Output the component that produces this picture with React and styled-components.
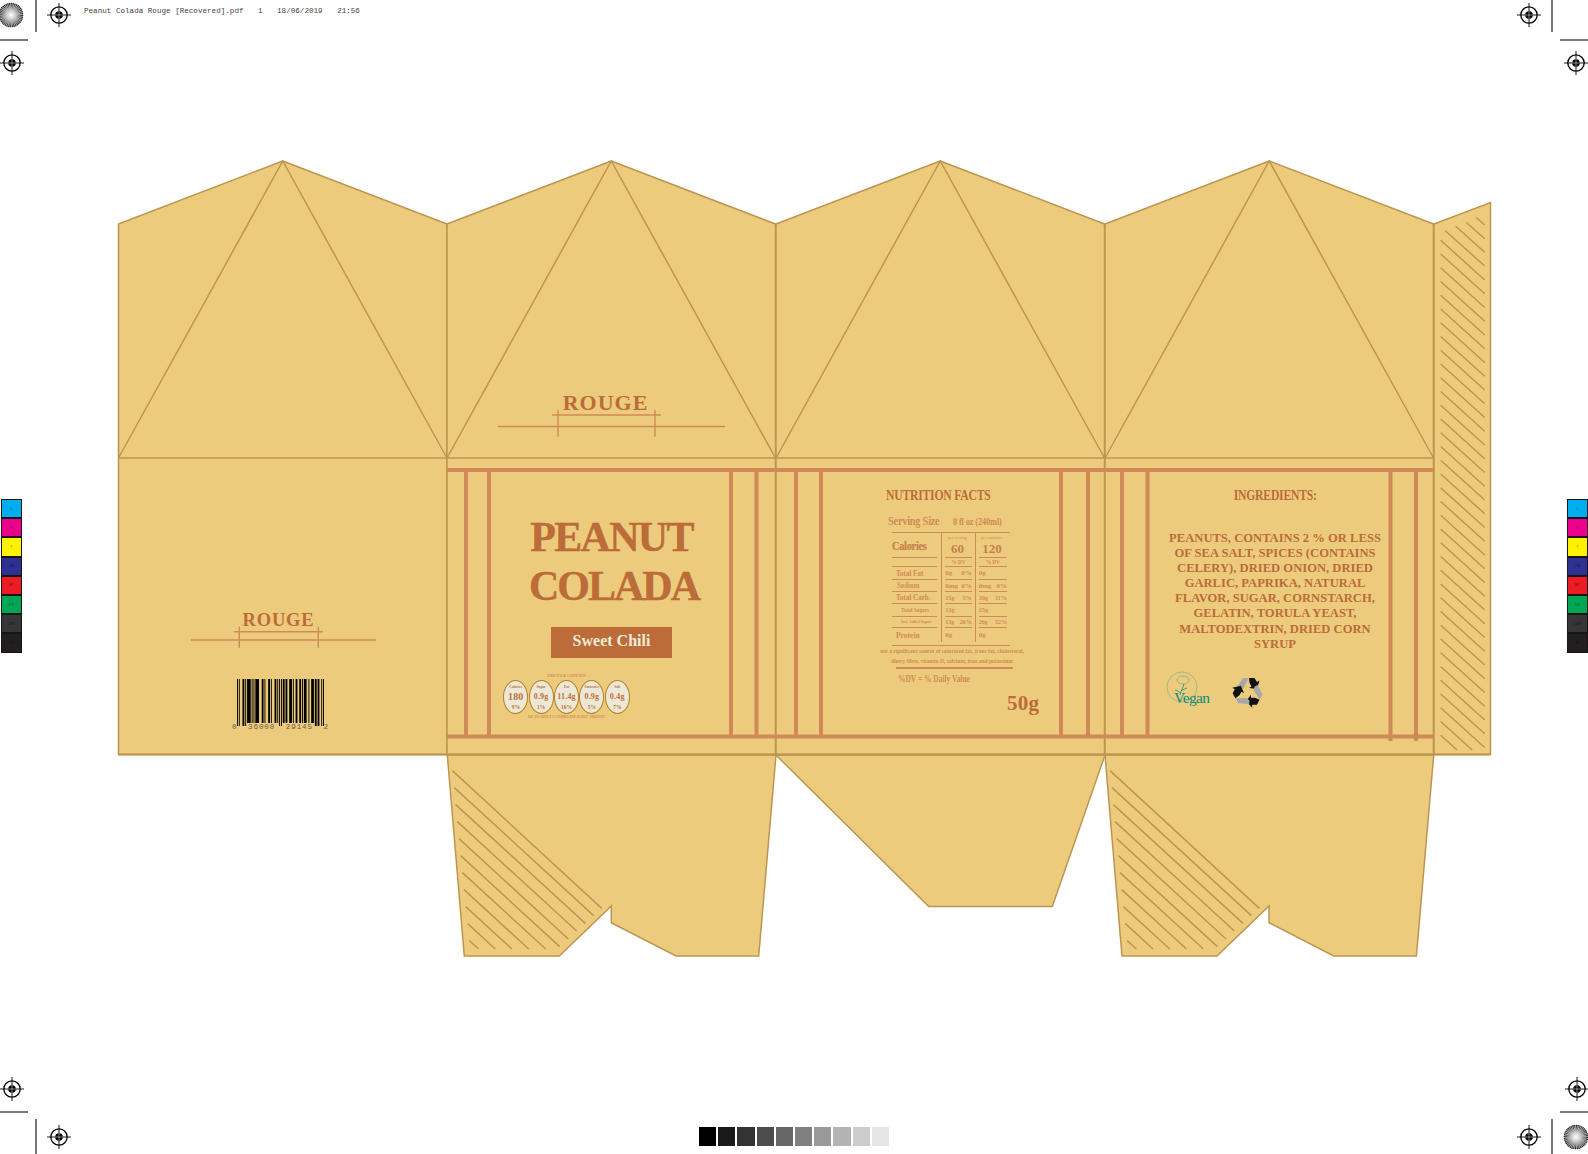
import React from "react";
import styled, { createGlobalStyle } from "styled-components";

const Global = createGlobalStyle`
  html, body { margin: 0; padding: 0; background: #fff; }
  body { font-family: "Liberation Serif", serif; }
`;

const FILL = "#edcb7d";
const CREASE = "#bd9550";
const BAND = "#d08a57";
const BROWN = "#bb6c38";
const SOFT = "#d08b55";

const Sheet = styled.div`
  position: relative;
  width: 1588px;
  height: 1154px;
  overflow: hidden;
  background: #fff;
  font-family: "Liberation Serif", serif;
`;

const DielineArt = styled.svg`
  position: absolute;
  left: 0;
  top: 0;
`;

/* ---- printer marks ---- */
const SlugLine = styled.div`
  position: absolute;
  left: 84px;
  top: 6px;
  display: flex;
  gap: 14.5px;
  font-family: "Liberation Mono", monospace;
  font-size: 7.6px;
  line-height: 10px;
  color: #444;
`;

const Mark = styled.svg`
  position: absolute;
  left: ${(p) => p.$x - 13}px;
  top: ${(p) => p.$y - 13}px;
`;

const Crop = styled.div`
  position: absolute;
  left: ${(p) => p.$x}px;
  top: ${(p) => p.$y}px;
  width: ${(p) => p.$w}px;
  height: ${(p) => p.$h}px;
  background: #7a7a7a;
`;

const ColorBar = styled.div`
  position: absolute;
  left: ${(p) => p.$x}px;
  top: 499px;
  width: 21px;
  display: flex;
  flex-direction: column;
`;

const ColorCell = styled.div`
  height: 17.2px;
  border: 1px solid #151515;
  background: ${(p) => p.$c};
  display: flex;
  align-items: center;
  justify-content: center;
  font-family: "Liberation Sans", sans-serif;
  font-size: 3.5px;
  color: rgba(0, 0, 0, 0.6);
`;

const GrayStrip = styled.div`
  position: absolute;
  left: 699px;
  top: 1127px;
  display: flex;
  gap: 2px;
`;

const GrayCell = styled.div`
  width: 17.2px;
  height: 19px;
  background: ${(p) => p.$c};
`;

/* ---- rouge logo ---- */
const Logo = styled.div`
  position: absolute;
  left: ${(p) => p.$x}px;
  top: ${(p) => p.$y}px;
  width: ${(p) => p.$w}px;
  height: ${(p) => p.$h}px;
`;

const LogoWord = styled.div`
  position: absolute;
  left: 0;
  right: ${(p) => p.$shift}px;
  top: ${(p) => p.$top}px;
  text-align: center;
  font-weight: 700;
  font-size: ${(p) => p.$size}px;
  letter-spacing: ${(p) => p.$track}px;
  line-height: 1;
  color: ${BROWN};
`;

const LogoArt = styled.svg`
  position: absolute;
  left: 0;
  top: 0;
`;

/* ---- barcode ---- */
const Barcode = styled.div`
  position: absolute;
  left: 232px;
  top: 679px;
  width: 97px;
`;

const Bars = styled.svg`
  display: block;
  margin-left: 4.7px;
`;

const BarDigits = styled.div`
  display: flex;
  justify-content: space-between;
  margin-top: -3px;
  font-family: "Liberation Mono", monospace;
  font-size: 7.6px;
  line-height: 8px;
  letter-spacing: 0.85px;
  color: #665d4a;
`;

/* ---- front panel ---- */
const FrontPanel = styled.section`
  position: absolute;
  left: 447px;
  top: 458px;
  width: 329px;
  height: 296px;
  display: flex;
  flex-direction: column;
  align-items: center;
  padding-top: 55px;
  box-sizing: border-box;
`;

const Title = styled.h1`
  margin: 0;
  font-size: 42px;
  line-height: 48.6px;
  font-weight: 700;
  -webkit-text-stroke: 0.4px ${BROWN};
  text-align: center;
  color: ${BROWN};
`;

const TitleLine = styled.span`
  display: block;
  letter-spacing: ${(p) => p.$track}px;
  margin-left: ${(p) => p.$nudge}px;
`;

const Flavour = styled.div`
  margin-top: 17px;
  width: 121px;
  height: 31px;
  padding-bottom: 3px;
  box-sizing: border-box;
  background: ${BROWN};
  color: #f1ebd9;
  font-size: 16px;
  font-weight: 700;
  display: flex;
  align-items: center;
  justify-content: center;
`;

const Gda = styled.div`
  align-self: flex-start;
  margin: 16px 0 0 56px;
  width: 127px;
  display: flex;
  flex-direction: column;
  align-items: center;
`;

const GdaNote = styled.div`
  font-size: 3.6px;
  line-height: 5px;
  font-weight: 700;
  white-space: nowrap;
  color: ${SOFT};
`;

const GdaRow = styled.div`
  display: flex;
  gap: 0.2px;
  margin: 0.5px 0 1.5px;
`;

const Oval = styled.div`
  width: 25.2px;
  height: 34px;
  box-sizing: border-box;
  border: 1.5px solid #b7802a;
  border-radius: 50%;
  background: #ece8d5;
  display: flex;
  flex-direction: column;
  align-items: center;
  justify-content: space-between;
  padding: 4px 0 3px;
  color: #c0703d;
`;

const OvalLabel = styled.div`
  font-size: 3.6px;
  line-height: 4px;
  font-weight: 700;
`;

const OvalValue = styled.div`
  font-size: ${(p) => (p.$big ? 10 : 8)}px;
  line-height: 9px;
  font-weight: 700;
  white-space: nowrap;
  letter-spacing: 0.2px;
`;

const OvalPct = styled.div`
  font-size: 5.5px;
  line-height: 6px;
  font-weight: 700;
`;

/* ---- nutrition panel ---- */
const NutritionPanel = styled.section`
  position: absolute;
  left: 776px;
  top: 458px;
  width: 329px;
  height: 296px;
  box-sizing: border-box;
  padding: 29px 0 0 110px;
  display: flex;
  flex-direction: column;
  align-items: flex-start;
`;

/* the reference face is a condensed didone, nothing installed comes close */
const PanelHeading = styled.h2`
  margin: 0;
  font-size: 15px;
  line-height: 16px;
  font-weight: 700;
  letter-spacing: -0.3px;
  white-space: nowrap;
  color: ${BROWN};
  transform: scaleX(0.78);
  transform-origin: ${(p) => p.$origin || "left"} center;
`;

const Serving = styled.div`
  margin: 10px 0 2.5px 2px;
  height: 16px;
  display: flex;
  align-items: center;
  gap: 15px;
  color: ${SOFT};
  font-weight: 700;
  white-space: nowrap;
`;

const ServingLabel = styled.span`
  display: inline-block;
  width: 50px;
  font-size: 12.5px;
  letter-spacing: -0.3px;
  transform: scaleX(0.83);
  transform-origin: left center;
`;

const ServingValue = styled.span`
  display: inline-block;
  font-size: 9.5px;
  letter-spacing: -0.2px;
  padding-top: 2px;
  transform: scaleX(0.89);
  transform-origin: left center;
`;

const Table = styled.div`
  margin-left: 6px;
  width: 118px;
  display: grid;
  grid-template-columns: 49.2px 33.6px 35.2px;
  border-top: 1.3px solid ${BAND};
  border-bottom: 1.3px solid ${BAND};
  padding-bottom: 2.5px;
  box-sizing: content-box;
  color: ${SOFT};
  font-weight: 700;
`;

const Cell = styled.div`
  height: ${(p) => p.$h}px;
  box-sizing: border-box;
  padding: ${(p) => (p.$first ? "0 4px 0 0" : "0 3px")};
  border-left: ${(p) => (p.$first ? "none" : `1.3px solid ${BAND}`)};
`;

const CellRow = styled.div`
  height: 100%;
  box-sizing: border-box;
  display: flex;
  align-items: center;
  justify-content: ${(p) => (p.$center ? "center" : "space-between")};
  white-space: nowrap;
  font-size: ${(p) => p.$size || 6}px;
  padding-left: ${(p) => p.$indent || 0}px;
  padding-top: ${(p) => p.$drop || 0}px;
  border-bottom: ${(p) => (p.$rule ? `1.2px solid ${BAND}` : "none")};
`;

const CellStack = styled.div`
  height: 100%;
  box-sizing: border-box;
  display: flex;
  flex-direction: column;
  align-items: center;
  padding-right: 2px;
  border-bottom: 1.2px solid ${BAND};
`;

const PerLabel = styled.div`
  margin-top: 2px;
  font-size: 4.2px;
  line-height: 6px;
  font-weight: 400;
  white-space: nowrap;
`;

const PerValue = styled.div`
  font-size: 13px;
  line-height: 15px;
  color: #c97f4d;
`;

const CaloriesLabel = styled.span`
  display: inline-block;
  font-size: 12px;
  letter-spacing: -0.3px;
  color: #c97f4d;
  -webkit-text-stroke: 0.2px #c97f4d;
  transform: scaleX(0.86);
  transform-origin: left center;
`;

const RowLabel = styled.span`
  display: inline-block;
  transform: scaleX(0.9);
  transform-origin: left center;
`;

const Footnote = styled.div`
  margin: 0 0 0 -7px;
  width: 146px;
  text-align: center;
  font-size: 5.5px;
  line-height: 10px;
  white-space: nowrap;
  font-weight: 700;
  color: ${SOFT};
`;

const FootRule = styled.div`
  margin: 1.5px 0 0 9.7px;
  width: 117px;
  height: 1.2px;
  background: ${BAND};
`;

const DailyValue = styled.div`
  margin: 4px 0 0 12px;
  font-size: 9.3px;
  line-height: 12px;
  font-weight: 700;
  white-space: nowrap;
  color: ${SOFT};
  transform: scaleX(0.8);
  transform-origin: left center;
`;

const Weight = styled.div`
  margin: 6px 0 0 121px;
  font-size: 21px;
  line-height: 24px;
  font-weight: 700;
  letter-spacing: 0.3px;
  color: ${BROWN};
`;

/* ---- ingredients panel ---- */
const IngredientsPanel = styled.section`
  position: absolute;
  left: 1105px;
  top: 458px;
  width: 329px;
  height: 296px;
  box-sizing: border-box;
  padding: 29px 0 0 11px;
  display: flex;
  flex-direction: column;
  align-items: center;
`;

const IngredientsText = styled.p`
  margin: 28px 0 0;
  font-size: 12.6px;
  line-height: 15.1px;
  font-weight: 700;
  text-align: center;
  white-space: nowrap;
  color: ${BROWN};
`;

const Badges = styled.div`
  align-self: flex-start;
  margin: 19px 0 0 50px;
  display: flex;
  align-items: flex-start;
  gap: 16px;
`;

const VeganBadge = styled.div`
  position: relative;
  width: 50px;
  height: 34px;
`;

const VeganWord = styled.span`
  position: absolute;
  left: 8px;
  top: 20px;
  font-size: 15.5px;
  line-height: 14px;
  letter-spacing: -0.7px;
  color: #0a8d7f;
`;

const VeganArt = styled.svg`
  position: absolute;
  left: 0;
  top: 0;
`;

const RecycleArt = styled.svg`
  display: block;
  margin-top: 5px;
`;

const upcL = ["0001101", "0011001", "0010011", "0111101", "0100011", "0110001", "0101111", "0111011", "0110111", "0001011"];
const upcR = upcL.map((c) => c.replace(/./g, (b) => (b === "0" ? "1" : "0")));

function upcModules(code) {
  const digits = code.split("").map(Number);
  return (
    "101" +
    digits.slice(0, 6).map((d) => upcL[d]).join("") +
    "01010" +
    digits.slice(6).map((d) => upcR[d]).join("") +
    "101"
  );
}

const isLongBar = (i) => i < 10 || i > 84 || (i >= 45 && i < 50);

// joins neighbouring modules so rects don't leave seams
function upcRuns(modules) {
  const runs = [];
  modules.split("").forEach((m, i) => {
    if (m !== "1") return;
    const last = runs[runs.length - 1];
    if (last && last.x + last.w === i && last.long === isLongBar(i)) last.w += 1;
    else runs.push({ x: i, w: 1, long: isLongBar(i) });
  });
  return runs;
}

const pt = (a) => a.map((p) => p.join(",")).join(" ");

const tops = [118.5, 447, 776, 1105];
const flap1 = [[447.3, 755], [464.3, 956], [559.3, 956], [611.3, 906], [611.3, 922.7], [676, 956], [758.7, 956], [776, 755]];
const flap1Hatch = [
  [37, 62, 485, 475], [43, 113, 461, 497], [47, 164, 436, 520], [52, 215, 410, 543],
  [57, 266, 385, 567], [62, 317, 359, 590], [67, 368, 317, 597], [72, 419, 266, 597],
  [77, 470, 216, 597], [83, 521, 166, 597], [88, 572, 116, 597],
].map(([a, b, c, d]) => [440 + a / 3, 750 + b / 3, 440 + c / 3, 750 + d / 3]);

function tabHatch() {
  const out = [
    [1476, 217.3, 1484.7, 225],
    [1466, 222.3, 1484.7, 238.7],
    [1455.7, 226.3, 1484.7, 252.3],
    [1445.3, 230.7, 1484.7, 266],
  ];
  for (let y = 240.3; y < 746; y += 13.75) {
    const end = y + 39.7;
    if (end <= 750) out.push([1440.7, y, 1484.7, end]);
    else out.push([1440.7, y, 1440.7 + ((750 - y) * 44) / 39.7, 750]);
  }
  return out;
}

const stripes = [466, 489, 731, 756.5, 796, 821, 1061, 1088, 1122, 1147.5, 1390.5, 1416];

function Dieline() {
  return (
    <DielineArt width="1588" height="1154" viewBox="0 0 1588 1154">
      {tops.map((x) => {
        const w = 328.5;
        const apex = x + w / 2;
        return (
          <g key={x}>
            <polygon
              points={pt([[x, 754.5], [x, 224], [apex, 161], [x + w, 224], [x + w, 754.5]])}
              fill={FILL}
              stroke={CREASE}
              strokeWidth="1.5"
              strokeLinejoin="round"
            />
            <polyline points={pt([[x, 458], [apex, 161], [x + w, 458]])} fill="none" stroke={CREASE} strokeWidth="1.5" />
            <line x1={x} y1="458" x2={x + w} y2="458" stroke={CREASE} strokeWidth="1.5" />
          </g>
        );
      })}
      <polygon points={pt([[1434, 224], [1490.5, 202.5], [1490.5, 754.5], [1434, 754.5]])} fill={FILL} stroke={CREASE} strokeWidth="1.5" />
      {tabHatch().map(([a, b, c, d], i) => (
        <line key={i} x1={a} y1={b} x2={c} y2={d} stroke={CREASE} strokeWidth="1.5" />
      ))}

      {[0, 657.7].map((dx) => (
        <g key={dx} transform={`translate(${dx} 0)`}>
          <polygon points={pt(flap1)} fill={FILL} stroke={CREASE} strokeWidth="1.5" />
          {flap1Hatch.map(([a, b, c, d], i) => (
            <line key={i} x1={a} y1={b} x2={c} y2={d} stroke={CREASE} strokeWidth="1.5" />
          ))}
        </g>
      ))}
      <polygon points={pt([[776, 755], [928.7, 906.5], [1052.3, 906.5], [1105, 755]])} fill={FILL} stroke={CREASE} strokeWidth="1.5" />

      <line x1="118" y1="754.5" x2="1490" y2="754.5" stroke={CREASE} strokeWidth="2" />

      <rect x="447" y="468" width="987" height="4" fill={BAND} />
      <rect x="447" y="734.5" width="987" height="4" fill={BAND} />
      {stripes.map((x) => (
        <rect key={x} x={x - 2} y="470" width="4" height={x > 1380 ? 271 : 266} fill={BAND} />
      ))}
    </DielineArt>
  );
}

function RegMark({ x, y }) {
  return (
    <Mark $x={x} $y={y} width="26" height="26" viewBox="-13 -13 26 26">
      <line x1="-12" y1="0" x2="12" y2="0" stroke="#000" strokeWidth="0.9" />
      <line x1="0" y1="-12" x2="0" y2="12" stroke="#000" strokeWidth="0.9" />
      <circle r="8.2" fill="none" stroke="#000" strokeWidth="1.3" />
      <circle r="3.8" fill="#000" />
      <line x1="-3.8" y1="0" x2="3.8" y2="0" stroke="#fff" strokeWidth="0.5" />
      <line x1="0" y1="-3.8" x2="0" y2="3.8" stroke="#fff" strokeWidth="0.5" />
    </Mark>
  );
}

function Starburst({ x, y }) {
  const wedges = [];
  for (let i = 0; i < 40; i++) {
    const a = (i / 40) * Math.PI * 2;
    const b = ((i + 0.5) / 40) * Math.PI * 2;
    wedges.push(
      <polygon
        key={i}
        points={`0,0 ${13 * Math.cos(a)},${13 * Math.sin(a)} ${13 * Math.cos(b)},${13 * Math.sin(b)}`}
        fill="#111"
      />
    );
  }
  const id = `burst${x}`;
  return (
    <Mark $x={x} $y={y} width="26" height="26" viewBox="-13 -13 26 26">
      <defs>
        <radialGradient id={id}>
          <stop offset="0" stopColor="#fff" />
          <stop offset="0.35" stopColor="#fff" stopOpacity="0.7" />
          <stop offset="1" stopColor="#fff" stopOpacity="0" />
        </radialGradient>
        <clipPath id={`${id}c`}>
          <circle r="12.3" />
        </clipPath>
      </defs>
      <g clipPath={`url(#${id}c)`}>
        <circle r="12.3" fill="#a0a0a0" />
        {wedges}
        <circle r="12.3" fill={`url(#${id})`} />
      </g>
    </Mark>
  );
}

function RougeLogo({ x, y, w, h, size, top, track, shift, long, short, v }) {
  return (
    <Logo $x={x} $y={y} $w={w} $h={h}>
      <LogoArt width={w} height={h}>
        <line x1="0" y1={long} x2={w} y2={long} stroke={BAND} strokeWidth="1.4" />
        <line x1={short[0]} y1={short[2]} x2={short[1]} y2={short[2]} stroke={BAND} strokeWidth="1.4" />
        <line x1={v[0]} y1={v[2]} x2={v[0]} y2={v[3]} stroke={BAND} strokeWidth="1.4" />
        <line x1={v[1]} y1={v[2]} x2={v[1]} y2={v[3]} stroke={BAND} strokeWidth="1.4" />
      </LogoArt>
      <LogoWord $top={top} $size={size} $track={track} $shift={shift}>ROUGE</LogoWord>
    </Logo>
  );
}

const colorCells = [
  ["#00aeef", "C"], ["#ec008c", "M"], ["#fff200", "Y"], ["#2e3192", "CM"],
  ["#ed1c24", "MY"], ["#00a651", "CY"], ["#363639", "CMY"], ["#231f20", "K"],
];

const grays = ["#000", "#1a1a1a", "#333", "#4d4d4d", "#666", "#808080", "#999", "#b3b3b3", "#ccc", "#e6e6e6"];

const gda = [
  ["Calories", "180", "9%", true],
  ["Sugar", "0.9g", "1%"],
  ["Fat", "11.4g", "16%"],
  ["Saturates", "0.9g", "5%"],
  ["Salt", "0.4g", "7%"],
];

const rows = [
  { h: 9, size: 5.2, label: "", a: ["% DV"], b: ["% DV"], center: true },
  { h: 13, size: 7.8, indent: 4, label: "Total Fat", a: ["0g", "0%"], b: ["0g"], vs: 7 },
  { h: 12, size: 7.6, indent: 5, label: "Sodium", a: ["0mg", "0%"], b: ["0mg", "0%"], vs: 7 },
  { h: 12, size: 7.8, indent: 4, label: "Total Carb.", a: ["15g", "5%"], b: ["30g", "11%"], vs: 6.2 },
  { h: 12.7, size: 5.8, indent: 9, label: "Total Sugars", a: ["13g"], b: ["25g"], vs: 6.2 },
  { h: 11.3, size: 4.2, indent: 9, label: "Incl. Added Sugars", a: ["13g", "26%"], b: ["26g", "52%"], vs: 6 },
  { h: 14.4, size: 8.4, indent: 4, label: "Protein", a: ["0g"], b: ["0g"], vs: 7, last: true },
];

function ValueCell({ row, vals }) {
  return (
    <Cell $h={row.h}>
      <CellRow $rule={!row.last} $center={row.center} $size={row.center ? row.size : row.vs}>
        {vals.map((v) => (
          <span key={v}>{v}</span>
        ))}
      </CellRow>
    </Cell>
  );
}

function NutritionTable() {
  return (
    <Table>
      <Cell $first $h={25.5}>
        <CellRow $rule $drop={3}>
          <CaloriesLabel>Calories</CaloriesLabel>
        </CellRow>
      </Cell>
      <Cell $h={25.5}>
        <CellStack>
          <PerLabel>per serving</PerLabel>
          <PerValue>60</PerValue>
        </CellStack>
      </Cell>
      <Cell $h={25.5}>
        <CellStack>
          <PerLabel>per container</PerLabel>
          <PerValue>120</PerValue>
        </CellStack>
      </Cell>
      {rows.map((row) => (
        <React.Fragment key={row.label || "dv"}>
          <Cell $first $h={row.h}>
            <CellRow $rule={!row.last} $size={row.size} $indent={row.indent}>
              <RowLabel>{row.label}</RowLabel>
            </CellRow>
          </Cell>
          <ValueCell row={row} vals={row.a} />
          <ValueCell row={row} vals={row.b} />
        </React.Fragment>
      ))}
    </Table>
  );
}

function RecycleIcon() {
  return (
    <RecycleArt width="32" height="32" viewBox="-16 -16 32 32">
      {[0, 120, 240].map((r) => (
        <g key={r} transform={`rotate(${r})`}>
          <polygon points="-11,-5 -5,-14 1,-14 -4.5,-4 -8,-3" fill="#a8a8a8" />
          <polygon points="1,-14 6.5,-14 9,-10 11.5,-11.5 9,-3 1,-4 3.5,-5.5 1.5,-9" fill="#111" />
        </g>
      ))}
    </RecycleArt>
  );
}

export default function App() {
  const runs = upcRuns(upcModules("036000291452"));
  return (
    <Sheet>
      <Global />
      <Dieline />

      <SlugLine>
        <span>Peanut Colada Rouge [Recovered].pdf</span>
        <span>1</span>
        <span>18/06/2019</span>
        <span>21:56</span>
      </SlugLine>

      <Starburst x={11} y={15} />
      <Starburst x={1576} y={1137} />
      <RegMark x={59} y={15} />
      <RegMark x={11.5} y={62.5} />
      <RegMark x={1529} y={15} />
      <RegMark x={1576} y={62.5} />
      <RegMark x={11.5} y={1089} />
      <RegMark x={59} y={1136.5} />
      <RegMark x={1529} y={1136.5} />
      <RegMark x={1576.5} y={1089} />

      <Crop $x={35} $y={0} $w={2} $h={32} />
      <Crop $x={0} $y={39} $w={28} $h={2} />
      <Crop $x={1551} $y={0} $w={2} $h={32} />
      <Crop $x={1560} $y={39} $w={28} $h={2} />
      <Crop $x={35} $y={1119} $w={2} $h={35} />
      <Crop $x={0} $y={1111} $w={28} $h={2} />
      <Crop $x={1551} $y={1119} $w={2} $h={35} />
      <Crop $x={1560} $y={1111} $w={28} $h={2} />

      <ColorBar $x={1}>
        {colorCells.map(([c, t]) => (
          <ColorCell key={t} $c={c}>{t}</ColorCell>
        ))}
      </ColorBar>
      <ColorBar $x={1567}>
        {colorCells.map(([c, t]) => (
          <ColorCell key={t} $c={c}>{t}</ColorCell>
        ))}
      </ColorBar>
      <GrayStrip>
        {grays.map((c) => (
          <GrayCell key={c} $c={c} />
        ))}
      </GrayStrip>

      <RougeLogo x={498} y={390} w={227} h={47} size={22} track={1} shift={12} top={2} long={36.5} short={[54, 163, 25]} v={[60, 157, 20, 46.6]} />
      <RougeLogo x={191} y={610} w={185} h={38} size={18.5} track={0.8} shift={10} top={1} long={30} short={[43, 132, 21.7]} v={[48.3, 127.3, 16.7, 37.7]} />

      <Barcode>
        <Bars width="87" height="47" viewBox="0 0 95 47" preserveAspectRatio="none">
          {runs.map((r) => (
            <rect key={r.x} x={r.x} y="0" width={r.w} height={r.long ? 47 : 44} fill="#000" />
          ))}
        </Bars>
        <BarDigits>
          <span>0</span>
          <span>36000</span>
          <span>29145</span>
          <span>2</span>
        </BarDigits>
      </Barcode>

      <FrontPanel>
        <Title>
          <TitleLine $track={-1.7} $nudge={0}>PEANUT</TitleLine>
          <TitleLine $track={-2} $nudge={5}>COLADA</TitleLine>
        </Title>
        <Flavour>Sweet Chili</Flavour>
        <Gda>
          <GdaNote>THIS PACK CONTAINS</GdaNote>
          <GdaRow>
            {gda.map(([label, value, pct, big]) => (
              <Oval key={label}>
                <OvalLabel>{label}</OvalLabel>
                <OvalValue $big={big}>{value}</OvalValue>
                <OvalPct>{pct}</OvalPct>
              </Oval>
            ))}
          </GdaRow>
          <GdaNote>OF AN ADULT'S GUIDELINE DAILY AMOUNT</GdaNote>
        </Gda>
      </FrontPanel>

      <NutritionPanel>
        <PanelHeading>NUTRITION FACTS</PanelHeading>
        <Serving>
          <ServingLabel>Serving Size</ServingLabel>
          <ServingValue>8 fl oz (240ml)</ServingValue>
        </Serving>
        <NutritionTable />
        <Footnote>
          not a significant source of saturated fat, trans fat, cholesterol,
          <br />
          dietry fibre, vitamin D, calcium, iron and potassium
        </Footnote>
        <FootRule />
        <DailyValue>%DV = % Daily Value</DailyValue>
        <Weight>50g</Weight>
      </NutritionPanel>

      <IngredientsPanel>
        <PanelHeading $origin="center">INGREDIENTS:</PanelHeading>
        <IngredientsText>
          PEANUTS, CONTAINS 2 % OR LESS
          <br />
          OF SEA SALT, SPICES (CONTAINS
          <br />
          CELERY), DRIED ONION, DRIED
          <br />
          GARLIC, PAPRIKA, NATURAL
          <br />
          FLAVOR, SUGAR, CORNSTARCH,
          <br />
          GELATIN, TORULA YEAST,
          <br />
          MALTODEXTRIN, DRIED CORN
          <br />
          SYRUP
        </IngredientsText>
        <Badges>
          <VeganBadge>
            <VeganArt width="50" height="36" viewBox="0 0 50 36">
              <circle cx="16" cy="16" r="15" fill="none" stroke="#4fa99a" strokeWidth="0.5" />
              <ellipse cx="17" cy="9" rx="6" ry="4" fill="none" stroke="#5b9f88" strokeWidth="0.6" />
              <path d="M18 13 C17 17 15 19 14 24 M15 20 C17 18 19 18 21 17 M14 22 C12 20 11 19 9 19" fill="none" stroke="#1b8d78" strokeWidth="0.8" />
            </VeganArt>
            <VeganWord>Vegan</VeganWord>
          </VeganBadge>
          <RecycleIcon />
        </Badges>
      </IngredientsPanel>
    </Sheet>
  );
}
